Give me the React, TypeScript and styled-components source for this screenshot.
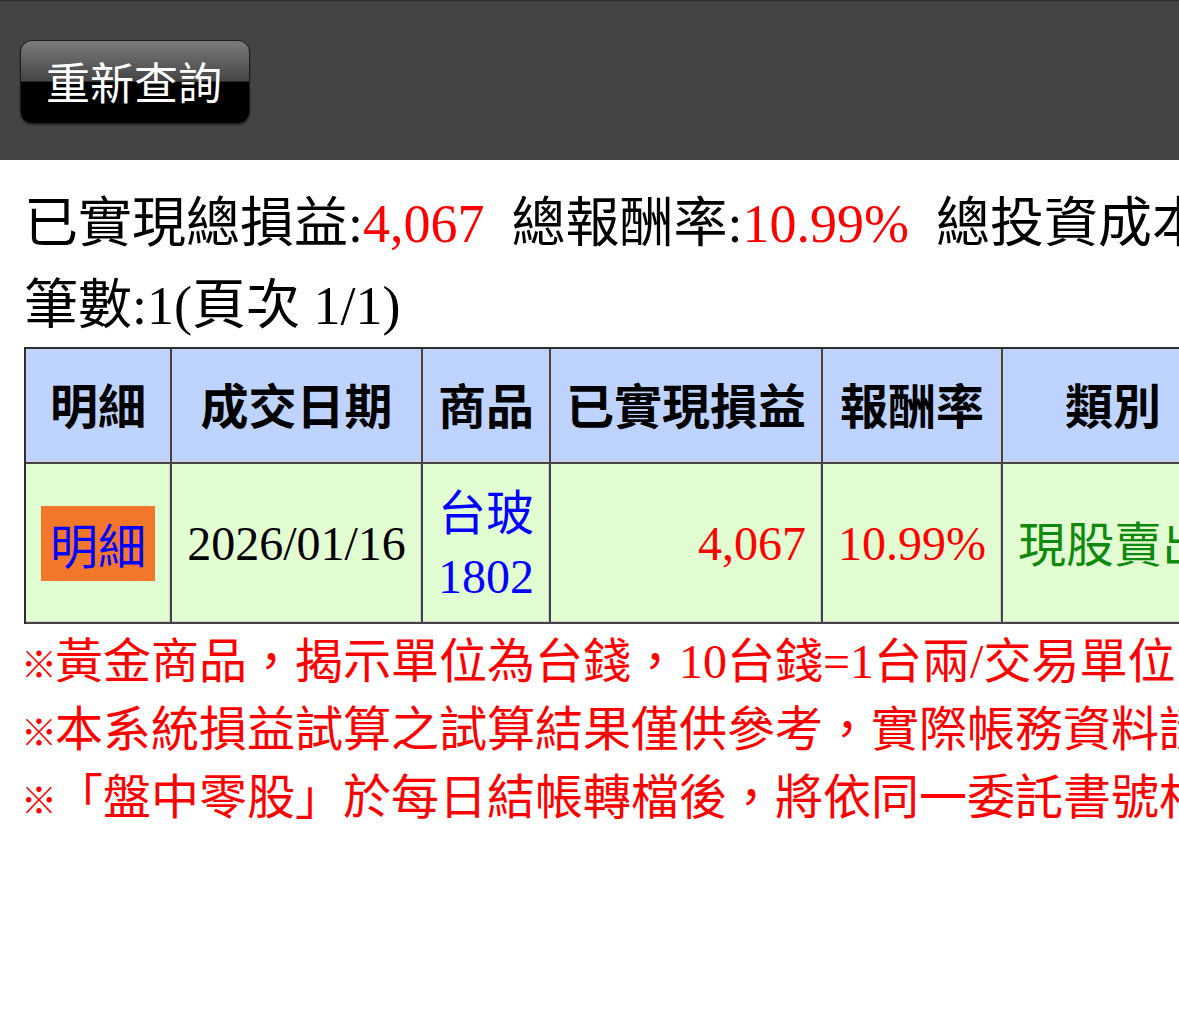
import React from "react";
import styled, { createGlobalStyle } from "styled-components";

const GlobalStyle = createGlobalStyle`
  html, body {
    margin: 0;
    padding: 0;
    overflow: hidden;
    background: #ffffff;
  }
  body {
    font-family: "Liberation Serif", "Noto Sans CJK TC", serif;
    color: #000;
  }
`;

const Page = styled.div`
  width: 1179px;
  overflow: hidden;
`;

const TopBar = styled.div`
  height: 160px;
  background: #444444;
  border-top: 1px solid #2c2c2c;
  display: flex;
  align-items: flex-start;
  padding: 39px 0 0 20px;
  box-sizing: border-box;
`;

const QueryButton = styled.button`
  width: 230px;
  height: 84px;
  border: 1px solid #1c1c1c;
  border-radius: 12px;
  background: linear-gradient(
    to bottom,
    #7c7c7c 0%,
    #5a5a5a 30%,
    #444444 49%,
    #000000 50%,
    #000000 100%
  );
  box-shadow: 0 1px 2px rgba(0, 0, 0, 0.45);
  color: #ffffff;
  font-family: "Noto Sans CJK TC", sans-serif;
  font-size: 44px;
  line-height: 1;
  padding: 0 2px 2px 0;
  cursor: pointer;
`;

const Content = styled.div`
  padding: 23px 0 0 24px;
`;

const SummaryLine = styled.div`
  font-size: 54px;
  line-height: 82px;
  white-space: nowrap;
`;

const Red = styled.span`
  color: #ff0000;
`;

const Gap = styled.span`
  display: inline-block;
  width: 27px;
`;

const Table = styled.table`
  border-collapse: separate;
  border-spacing: 0;
  table-layout: fixed;
  width: 1201px;
  border-top: 2px solid #2e2e2e;
  border-left: 2px solid #2e2e2e;
  font-size: 48px;
`;

const Cell = styled.td<{ $w?: number; $align?: string }>`
  box-sizing: border-box;
  width: ${(p) => (p.$w ? `${p.$w}px` : "auto")};
  text-align: ${(p) => p.$align || "center"};
  border-right: 2px solid #444444;
  border-bottom: 2px solid #444444;
  box-shadow: inset -1px -1px 0 #d0d0d0;
  padding: 0 15px;
  white-space: nowrap;
  overflow: hidden;
`;

const HeadCell = styled(Cell).attrs({ as: "th" })`
  height: 115px;
  padding-bottom: 6px;
  background: #bed3fd;
  font-family: "Noto Sans CJK TC", sans-serif;
  font-weight: 700;
  line-height: 60px;
`;

const DataCell = styled(Cell)<{ $color?: string }>`
  height: 160px;
  background: #e3fdd2;
  color: ${(p) => p.$color || "#000"};
  line-height: 63px;
`;

const CjkText = styled.span`
  font-family: "Noto Sans CJK TC", sans-serif;
`;

const DetailLink = styled.a`
  display: inline-block;
  background: #f3772b;
  color: #0000ff;
  text-decoration: none;
  font-family: "Noto Sans CJK TC", sans-serif;
  line-height: 75px;
  padding: 0 9px;
  vertical-align: middle;
`;

const StockLink = styled.a`
  color: #0000ff;
  text-decoration: none;
  display: block;
`;

const Notes = styled.div`
  margin-top: 4px;
  color: #ff0000;
  font-size: 48px;
  line-height: 68px;
  white-space: nowrap;
`;

const NoteLine = styled.div`
  height: 68px;
`;

const Mark = styled.span`
  display: inline-block;
  width: 31px;
  margin-left: -3px;
  margin-right: 3px;
  font-family: "Noto Sans CJK TC", sans-serif;
  font-size: 36px;
  line-height: 1;
  vertical-align: baseline;
  text-align: left;
`;

const headers: { label: string; w: number }[] = [
  { label: "明細", w: 146 },
  { label: "成交日期", w: 251 },
  { label: "商品", w: 128 },
  { label: "已實現損益", w: 272 },
  { label: "報酬率", w: 180 },
  { label: "類別", w: 222 },
];

const notes = [
  "黃金商品，揭示單位為台錢，10台錢=1台兩/交易單位",
  "本系統損益試算之試算結果僅供參考，實際帳務資料請以對帳單為準",
  "「盤中零股」於每日結帳轉檔後，將依同一委託書號相同價格合併顯示",
];

export default function App() {
  return (
    <Page>
      <GlobalStyle />
      <TopBar>
        <QueryButton type="button">重新查詢</QueryButton>
      </TopBar>
      <Content>
        <SummaryLine>
          已實現總損益:<Red>4,067</Red>
          <Gap />
          總報酬率:<Red>10.99%</Red>
          <Gap />
          總投資成本:37,003
        </SummaryLine>
        <SummaryLine>筆數:1(頁次 1/1)</SummaryLine>
        <Table>
          <thead>
            <tr>
              {headers.map((h) => (
                <HeadCell key={h.label} $w={h.w}>
                  {h.label}
                </HeadCell>
              ))}
            </tr>
          </thead>
          <tbody>
            <tr>
              <DataCell>
                <DetailLink href="#">明細</DetailLink>
              </DataCell>
              <DataCell>2026/01/16</DataCell>
              <DataCell>
                <StockLink href="#">
                  <CjkText>台玻</CjkText>
                  <br />
                  1802
                </StockLink>
              </DataCell>
              <DataCell $align="right" $color="#ff0000">
                4,067
              </DataCell>
              <DataCell $color="#ff0000">10.99%</DataCell>
              <DataCell $color="#0f8a0f">
                <CjkText>現股賣出</CjkText>
              </DataCell>
            </tr>
          </tbody>
        </Table>
        <Notes>
          {notes.map((n) => (
            <NoteLine key={n}>
              <Mark>※</Mark>
              {n}
            </NoteLine>
          ))}
        </Notes>
      </Content>
    </Page>
  );
}
